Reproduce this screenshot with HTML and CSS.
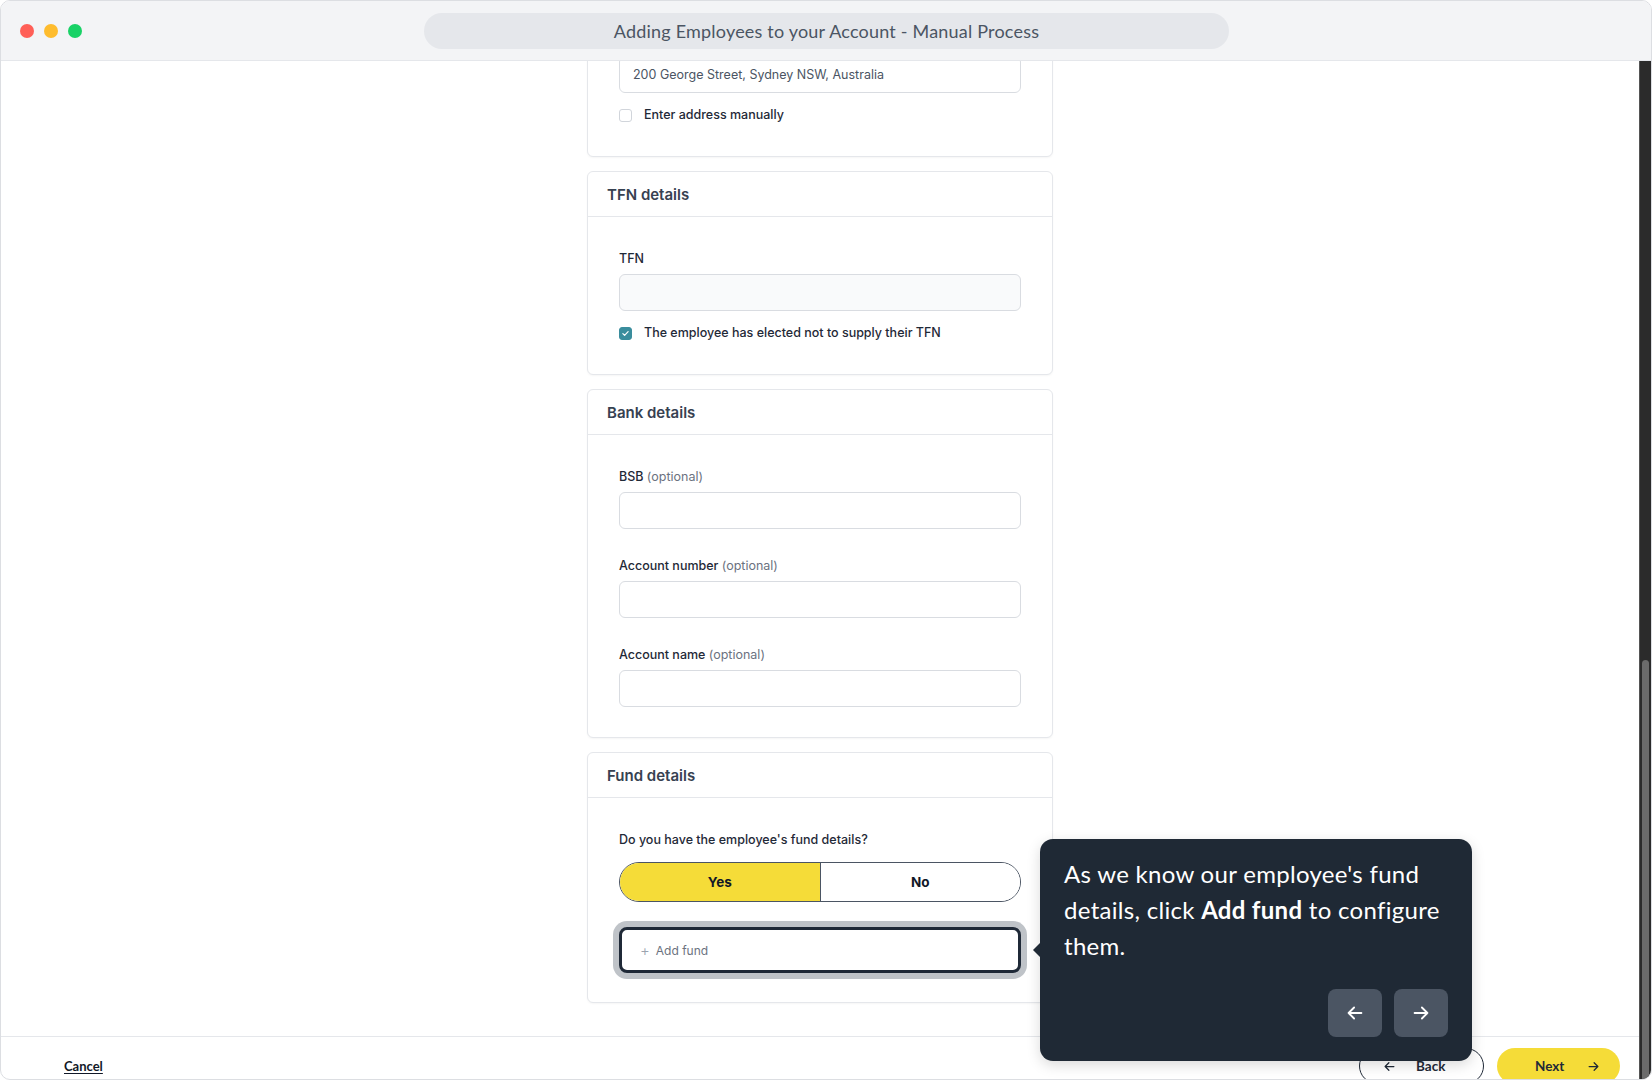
FILE: index.html
```html
<!DOCTYPE html>
<html lang="en">
<head>
  <meta charset="UTF-8">
  <meta name="viewport" content="width=device-width, initial-scale=1.0">
  <title>Adding Employees to your Account - Manual Process</title>
  <link rel="stylesheet" href="styles.css">
</head>
<body>
  <div class="window">
    <header class="titlebar">
      <div class="lights">
        <span class="light red"></span>
        <span class="light yellow"></span>
        <span class="light green"></span>
      </div>
      <div class="title">Adding Employees to your Account - Manual Process</div>
    </header>

    <div class="frame">
      <div class="page">
        <main class="content">
          <div class="form">

            <section class="card">
              <div class="card-head">Contact details</div>
              <div class="card-body">
                <div class="field">
                  <label class="label">Address</label>
                  <div class="input">200 George Street, Sydney NSW, Australia</div>
                </div>
                <div class="check-row">
                  <span class="checkbox"></span>
                  <span>Enter address manually</span>
                </div>
              </div>
            </section>

            <section class="card">
              <div class="card-head">TFN details</div>
              <div class="card-body">
                <div class="field">
                  <label class="label">TFN</label>
                  <div class="input disabled"></div>
                </div>
                <div class="check-row">
                  <span class="checkbox checked">
                    <svg viewBox="0 0 12 12" width="9" height="9"><path d="M2.5 6.2l2.3 2.3 4.7-5" fill="none" stroke="#fff" stroke-width="1.6" stroke-linecap="round" stroke-linejoin="round"/></svg>
                  </span>
                  <span>The employee has elected not to supply their TFN</span>
                </div>
              </div>
            </section>

            <section class="card">
              <div class="card-head">Bank details</div>
              <div class="card-body">
                <div class="field">
                  <label class="label">BSB <span class="optional">(optional)</span></label>
                  <div class="input"></div>
                </div>
                <div class="field">
                  <label class="label">Account number <span class="optional">(optional)</span></label>
                  <div class="input"></div>
                </div>
                <div class="field">
                  <label class="label">Account name <span class="optional">(optional)</span></label>
                  <div class="input"></div>
                </div>
              </div>
            </section>

            <section class="card">
              <div class="card-head">Fund details</div>
              <div class="card-body">
                <div class="question">Do you have the employee's fund details?</div>
                <div class="toggle">
                  <button class="toggle-opt active">Yes</button>
                  <button class="toggle-opt">No</button>
                </div>
                <button class="add-fund"><span class="plus">+</span> Add fund</button>
              </div>
            </section>

          </div>
        </main>

        <footer class="footer">
          <a class="cancel" href="#">Cancel</a>
          <div class="footer-actions">
            <button class="btn btn-back">
              <svg viewBox="0 0 24 24" width="15" height="15"><path d="M19 12H5M11 6l-6 6 6 6" fill="none" stroke="currentColor" stroke-width="2" stroke-linecap="round" stroke-linejoin="round"/></svg>
              Back
            </button>
            <button class="btn btn-next">
              Next
              <svg viewBox="0 0 24 24" width="15" height="15"><path d="M5 12h14M13 6l6 6-6 6" fill="none" stroke="currentColor" stroke-width="2" stroke-linecap="round" stroke-linejoin="round"/></svg>
            </button>
          </div>
        </footer>
      </div>

      <div class="scrollbar"><div class="thumb"></div></div>
    </div>

    <div class="tour">
      <p>As we know our employee's fund details, click <b>Add fund</b> to configure them.</p>
      <div class="tour-nav">
        <button class="tour-btn">
          <svg viewBox="0 0 24 24" width="22" height="22"><path d="M19 12H5M11 6l-6 6 6 6" fill="none" stroke="#fff" stroke-width="2" stroke-linecap="round" stroke-linejoin="round"/></svg>
        </button>
        <button class="tour-btn">
          <svg viewBox="0 0 24 24" width="22" height="22"><path d="M5 12h14M13 6l6 6-6 6" fill="none" stroke="#fff" stroke-width="2" stroke-linecap="round" stroke-linejoin="round"/></svg>
        </button>
      </div>
    </div>
  </div>
</body>
</html>
```

FILE: styles.css
```css
html, body {
  margin: 0;
  height: 100%;
  overflow: hidden;
  background: #fff;
}
* {
  box-sizing: border-box;
}
button {
  font: inherit;
  cursor: pointer;
}

.window {
  position: relative;
  height: 100vh;
  border: 1px solid #dcdee2;
  border-radius: 10px;
  overflow: hidden;
  display: flex;
  flex-direction: column;
  font-family: Inter, "Noto Sans", sans-serif;
  color: #1f2937;
}

/* title bar */
.titlebar {
  height: 60px;
  flex-shrink: 0;
  background: #f3f4f6;
  border-bottom: 1px solid #e5e7eb;
  display: flex;
  align-items: center;
  position: relative;
}
.lights {
  display: flex;
  gap: 10px;
  padding-left: 19px;
}
.light {
  width: 14px;
  height: 14px;
  border-radius: 50%;
}
.red { background: #ff5f57; }
.yellow { background: #febc2e; }
.green { background: #18d266; }
.title {
  position: absolute;
  left: 423px;
  width: 805px;
  height: 36px;
  top: 12px;
  border-radius: 18px;
  background: #e5e7eb;
  font-family: Lato, sans-serif;
  font-size: 18px;
  letter-spacing: 0.2px;
  color: #4b5563;
  display: flex;
  align-items: center;
  justify-content: center;
}

/* main frame */
.frame {
  flex: 1;
  display: flex;
  min-height: 0;
}
.page {
  flex: 1;
  display: flex;
  flex-direction: column;
  min-width: 0;
}
.content {
  flex: 1;
  min-height: 0;
  overflow: hidden;
  display: flex;
  flex-direction: column;
  justify-content: flex-end;
  align-items: center;
  padding-bottom: 33px;
}
.form {
  width: 466px;
  display: flex;
  flex-direction: column;
  gap: 14px;
  flex-shrink: 0;
}

.card {
  border: 1px solid #e5e7eb;
  border-radius: 6px;
  background: #fff;
  box-shadow: 0 1px 2px rgba(0, 0, 0, 0.04);
}
.card-head {
  height: 45px;
  border-bottom: 1px solid #e5e7eb;
  padding: 0 19px;
  display: flex;
  align-items: center;
  font-size: 15px;
  font-weight: 600;
  color: #374151;
}
.card-body {
  padding: 32px 31px 30px;
}
.field + .field {
  margin-top: 27px;
}
.label {
  display: block;
  font-size: 12.5px;
  line-height: 20px;
  font-weight: 500;
  color: #1f2937;
  margin-bottom: 5px;
}
.optional {
  font-weight: 400;
  color: #6b7280;
}
.input {
  height: 37px;
  border: 1px solid #d9dce1;
  border-radius: 6px;
  padding: 0 13px;
  display: flex;
  align-items: center;
  font-size: 12.5px;
  color: #4b5563;
}
.input.disabled {
  background: #f9fafb;
}

.check-row {
  margin-top: 13px;
  display: flex;
  align-items: center;
  gap: 12px;
  font-size: 12.5px;
  line-height: 18px;
  font-weight: 500;
  margin-bottom: 2px;
}
.checkbox {
  width: 13px;
  height: 13px;
  border: 1px solid #d1d5db;
  border-radius: 3px;
  display: flex;
  align-items: center;
  justify-content: center;
  flex-shrink: 0;
}
.checkbox.checked {
  background: #3a8d9d;
  border-color: #3a8d9d;
}

.question {
  font-size: 12.5px;
  line-height: 20px;
  font-weight: 500;
  margin-bottom: 12px;
}
.toggle {
  display: flex;
  height: 40px;
  border: 1px solid #4b5563;
  border-radius: 20px;
  overflow: hidden;
}
.toggle-opt {
  flex: 1;
  border: none;
  background: #fff;
  font-size: 13.5px;
  font-weight: 700;
  color: #111827;
}
.toggle-opt.active {
  background: #f5dc38;
  border-right: 1px solid #4b5563;
}
.add-fund {
  margin-top: 25px;
  margin-bottom: -1px;
  width: 100%;
  height: 46px;
  border: 3px solid #1f2937;
  border-radius: 8px;
  background: #fff;
  box-shadow: 0 0 0 6px #bfc3c8;
  display: flex;
  align-items: center;
  padding: 0 18px;
  gap: 6px;
  font-size: 12px;
  color: #6b7280;
}
.plus {
  font-size: 15px;
  font-weight: 300;
  color: #9ca3af;
}

/* footer */
.footer {
  height: 43px;
  flex-shrink: 0;
  border-top: 1px solid #e5e7eb;
  padding: 11px 19px 0 63px;
  display: flex;
  justify-content: space-between;
  align-items: flex-start;
  font-family: Lato, sans-serif;
}
.cancel {
  height: 36px;
  display: flex;
  align-items: center;
  font-size: 13px;
  font-weight: 700;
  color: #111827;
  text-decoration: underline;
  text-underline-offset: 2px;
}
.footer-actions {
  display: flex;
  gap: 13px;
}
.btn {
  height: 36px;
  border-radius: 18px;
  display: flex;
  align-items: center;
  gap: 19px;
  font-size: 13.5px;
  font-weight: 700;
  color: #1f2937;
}
.btn-back {
  width: 125px;
  padding-left: 22px;
  background: #fff;
  border: 1.5px solid #1f2937;
}
.btn-next {
  width: 123px;
  padding-left: 38px;
  gap: 22px;
  background: #f5dc38;
  border: none;
}

.scrollbar {
  width: 12px;
  flex-shrink: 0;
  background: #2b2b2b;
  border-left: 1px solid #555;
  padding-top: 599px;
  display: flex;
  justify-content: center;
}
.thumb {
  width: 7px;
  height: 100%;
  border-radius: 4px 4px 0 0;
  background: #6b6b6b;
}

/* tour tooltip */
.tour {
  position: absolute;
  left: 1039px;
  top: 838px;
  width: 432px;
  height: 222px;
  background: #1f2935;
  border-radius: 13px;
  padding: 17px 24px 24px;
  display: flex;
  flex-direction: column;
  font-family: Lato, sans-serif;
  box-shadow: 0 4px 14px rgba(0, 0, 0, 0.15);
}
.tour::before {
  content: "";
  position: absolute;
  left: -7px;
  top: 104px;
  border-style: solid;
  border-width: 7px 7px 7px 0;
  border-color: transparent #1f2935 transparent transparent;
}
.tour p {
  margin: 0;
  font-size: 24px;
  line-height: 36px;
  letter-spacing: 0.3px;
  color: #fff;
}
.tour-nav {
  margin-top: auto;
  display: flex;
  justify-content: flex-end;
  gap: 12px;
}
.tour-btn {
  width: 54px;
  height: 48px;
  border: none;
  border-radius: 8px;
  background: #4b5563;
  display: flex;
  align-items: center;
  justify-content: center;
}
```
